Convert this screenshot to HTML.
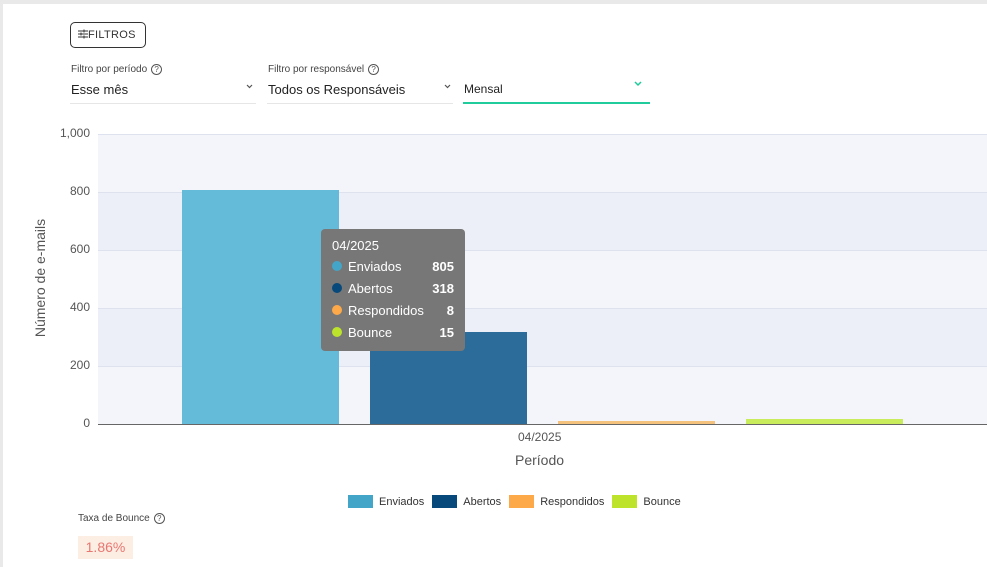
<!DOCTYPE html>
<html><head><meta charset="utf-8"><style>
*{margin:0;padding:0;box-sizing:border-box}
body{width:987px;height:567px;background:#e9e9e9;font-family:"Liberation Sans",sans-serif;position:relative;overflow:hidden}
.card{position:absolute;left:3px;top:4px;right:0;bottom:0;background:#fff}
.a{position:absolute}
.q{display:inline-block;width:11px;height:11px;border:1px solid #555;border-radius:50%;font-size:8px;text-align:center;line-height:9px;color:#555;vertical-align:middle;margin-left:4px}
.lbl{font-size:10px;color:#444}
.val{font-size:13px;color:#222}
.ul{height:1px;background:#e6e6e6}
.yl{font-size:12px;color:#555;width:40px;text-align:right}
.tt div{font-size:13px;color:#fff;height:22px;display:flex;align-items:center}
.dot{width:10px;height:10px;border-radius:50%;margin-right:6px}
.tt b{margin-left:auto}
.lg{font-size:11px;color:#333;display:flex;align-items:center}
.lg span{display:inline-block;width:25px;height:13px;margin:0 6px 0 8px}
</style></head><body>
<div class="card"></div>
<div class="a" style="left:70px;top:22px;width:76px;height:26px;border:1px solid #333;border-radius:5px;font-size:11px;color:#333;line-height:24px;padding-left:7px;letter-spacing:0.3px"><svg width="10" height="10" viewBox="0 0 10 10" style="vertical-align:-1px" stroke="#333" stroke-width="1"><path d="M0 2H10M0 5H10M0 8H10M6 0.5V3.5M3 3.5V6.5M6 6.5V9.5"/></svg>FILTROS</div>
<div class="a lbl" style="left:71px;top:64px">Filtro por período<span class="q">?</span></div>
<div class="a val" style="left:71px;top:82px">Esse mês</div>
<svg class="a" style="left:246px;top:84px" width="7" height="5" viewBox="0 0 7 5"><path d="M1 1L3.5 3.5L6 1" fill="none" stroke="#555" stroke-width="1.2"/></svg>
<div class="a ul" style="left:70px;top:103px;width:186px"></div>
<div class="a lbl" style="left:268px;top:64px">Filtro por responsável<span class="q">?</span></div>
<div class="a val" style="left:268px;top:82px">Todos os Responsáveis</div>
<svg class="a" style="left:444px;top:84px" width="7" height="5" viewBox="0 0 7 5"><path d="M1 1L3.5 3.5L6 1" fill="none" stroke="#555" stroke-width="1.2"/></svg>
<div class="a ul" style="left:267px;top:103px;width:186px"></div>
<div class="a val" style="left:464px;top:82px;font-size:12px">Mensal</div>
<svg class="a" style="left:634px;top:81px" width="8" height="6" viewBox="0 0 8 6"><path d="M1 1L4 4L7 1" fill="none" stroke="#1ec99a" stroke-width="1.5"/></svg>
<div class="a" style="left:463px;top:102px;width:187px;height:2px;background:#20cc9c"></div>
<div class="a" style="left:98px;top:134px;width:889px;height:290px;background:#f4f5fa"></div>
<div class="a" style="left:98px;top:192px;width:889px;height:58px;background:#eceff8"></div>
<div class="a" style="left:98px;top:308px;width:889px;height:58px;background:#eceff8"></div>
<div class="a" style="left:98px;top:134px;width:889px;height:1px;background:#dde2ee"></div>
<div class="a" style="left:98px;top:192px;width:889px;height:1px;background:#dde2ee"></div>
<div class="a" style="left:98px;top:250px;width:889px;height:1px;background:#dde2ee"></div>
<div class="a" style="left:98px;top:308px;width:889px;height:1px;background:#dde2ee"></div>
<div class="a" style="left:98px;top:366px;width:889px;height:1px;background:#dde2ee"></div>
<div class="a" style="left:98px;top:424px;width:889px;height:1px;background:#666"></div>
<div class="a yl" style="left:50px;top:126px">1,000</div>
<div class="a yl" style="left:50px;top:184px">800</div>
<div class="a yl" style="left:50px;top:242px">600</div>
<div class="a yl" style="left:50px;top:300px">400</div>
<div class="a yl" style="left:50px;top:358px">200</div>
<div class="a yl" style="left:50px;top:416px">0</div>
<div class="a" style="left:-20px;top:270px;width:120px;text-align:center;transform:rotate(-90deg);font-size:14px;color:#555">Número de e-mails</div>
<div class="a" style="left:182px;top:190px;width:157px;height:234px;background:#64bbd9"></div>
<div class="a" style="left:370px;top:332px;width:157px;height:92px;background:#2b6c9a"></div>
<div class="a" style="left:558px;top:421px;width:157px;height:3px;background:#f5c27e"></div>
<div class="a" style="left:746px;top:419px;width:157px;height:5px;background:#c8ec5c"></div>
<div class="a" style="left:518px;top:430px;font-size:12px;color:#555">04/2025</div>
<div class="a" style="left:515px;top:452px;font-size:14px;color:#555">Período</div>
<div class="a tt" style="left:321px;top:229px;width:144px;height:122px;background:#777;border-radius:4px;padding:6px 11px">
<div style="height:20px">04/2025</div>
<div><i class="dot" style="background:#43a6c8"></i>Enviados<b>805</b></div>
<div><i class="dot" style="background:#06497a"></i>Abertos<b>318</b></div>
<div><i class="dot" style="background:#fda94a"></i>Respondidos<b>8</b></div>
<div><i class="dot" style="background:#bde42b"></i>Bounce<b>15</b></div>
</div>
<div class="a lg" style="left:340px;top:495px"><span style="background:#43a6c8"></span>Enviados<span style="background:#06497a"></span>Abertos<span style="background:#fda94a"></span>Respondidos<span style="background:#bde42b"></span>Bounce</div>
<div class="a lbl" style="left:78px;top:513px">Taxa de Bounce<span class="q">?</span></div>
<div class="a" style="left:78px;top:536px;width:55px;height:23px;background:#fdeee3;color:#e87772;font-size:14px;line-height:23px;text-align:center">1.86%</div>
</body></html>
